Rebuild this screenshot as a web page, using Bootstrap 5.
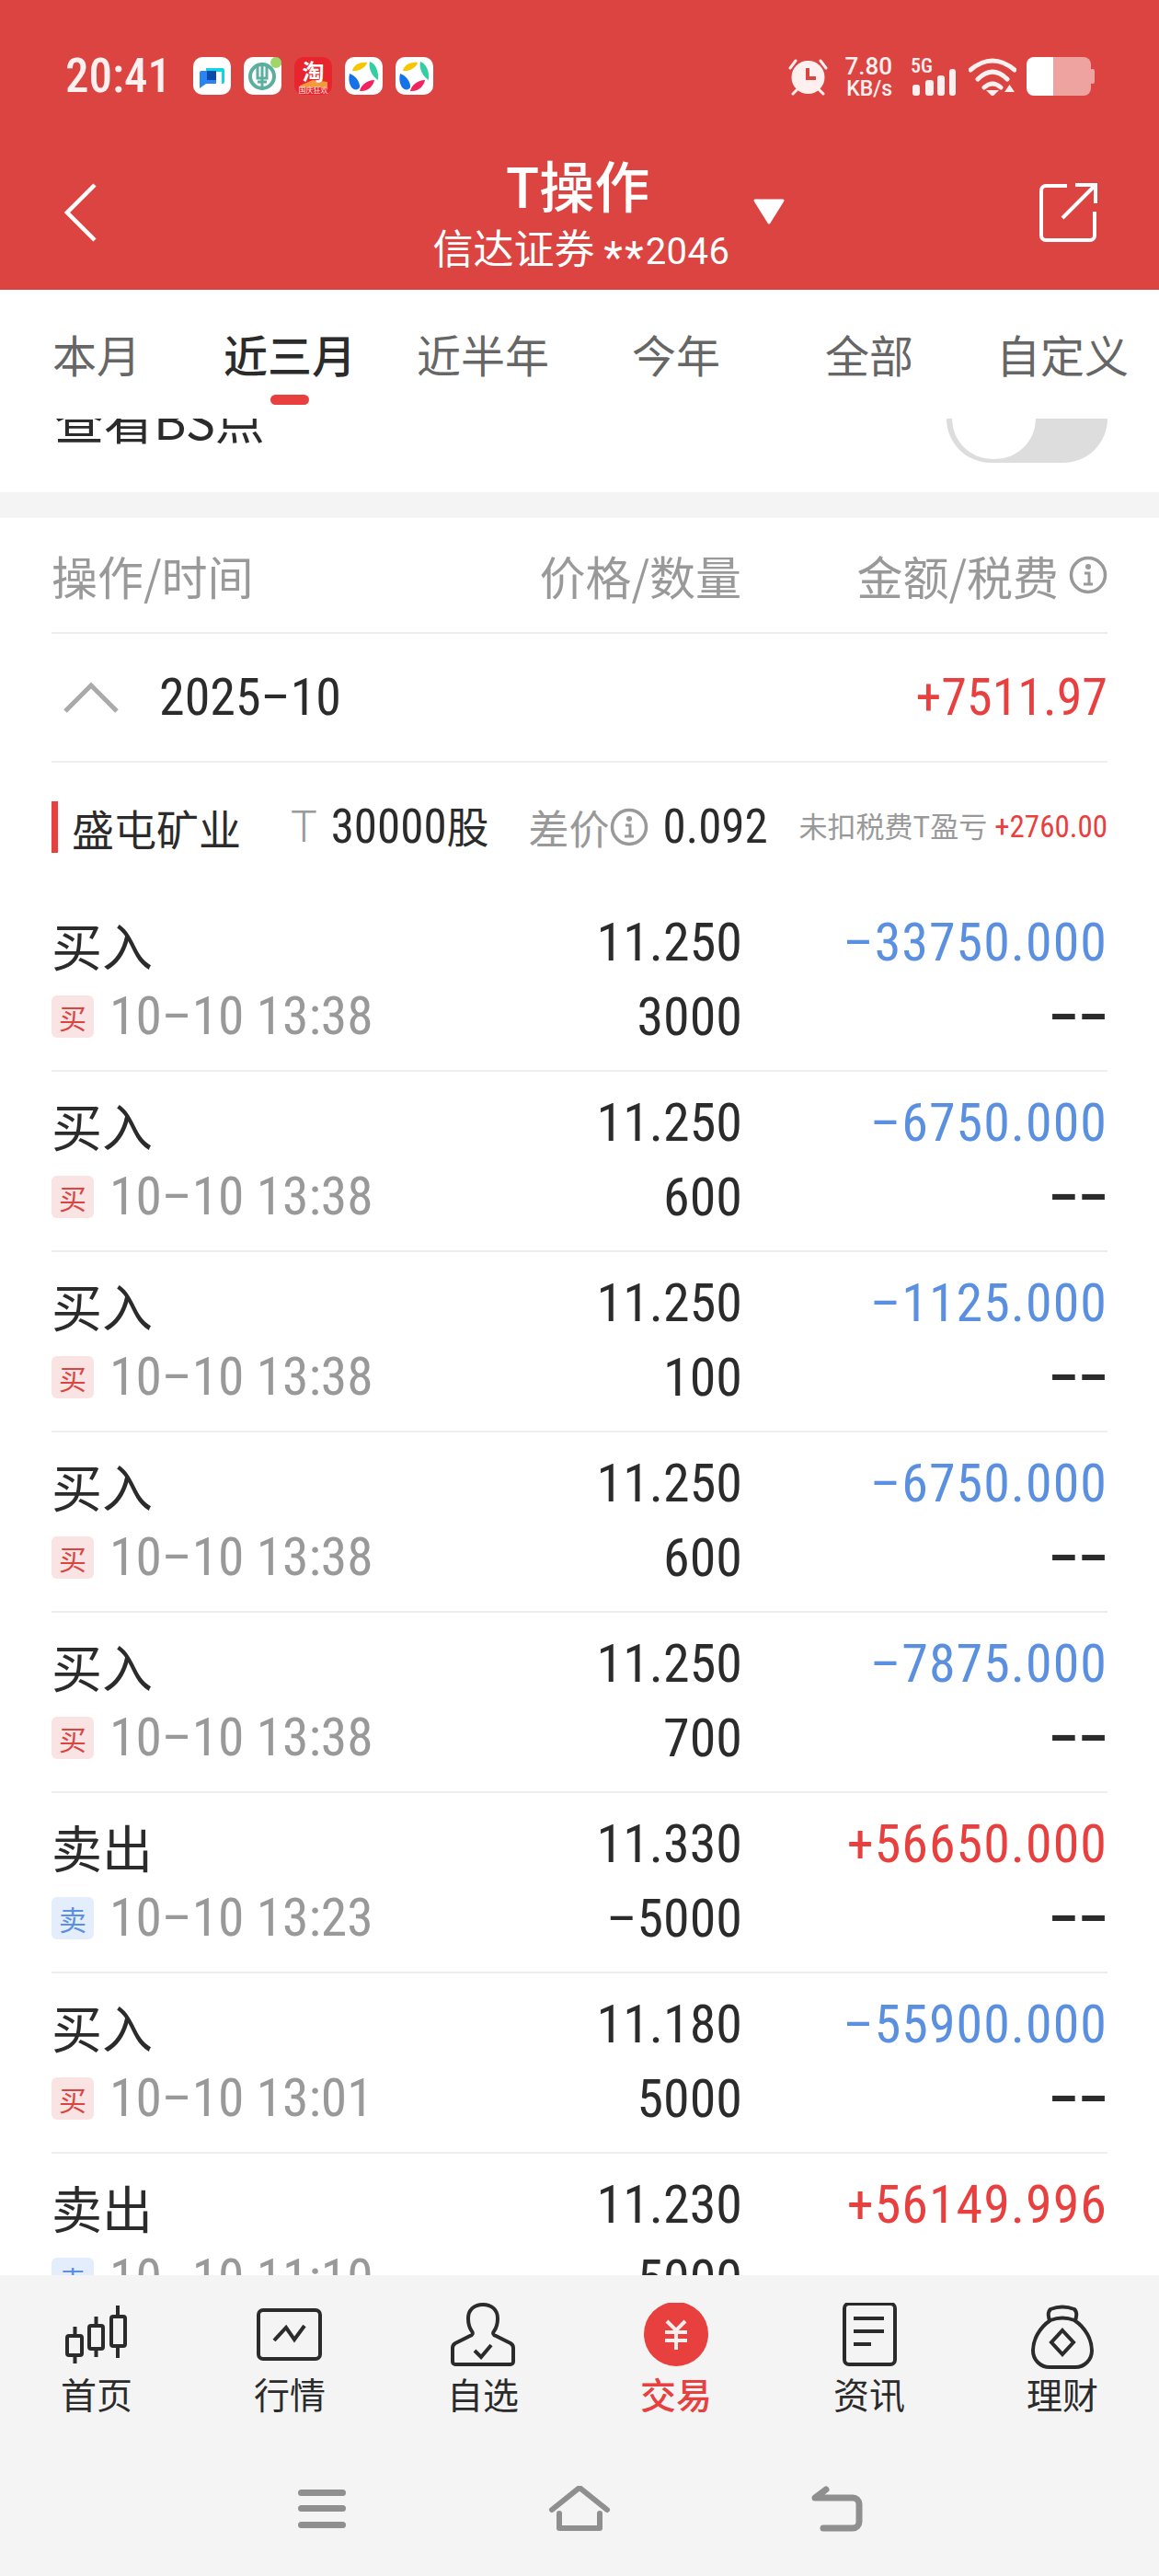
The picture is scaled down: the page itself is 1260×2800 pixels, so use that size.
<!DOCTYPE html>
<html lang="zh-CN">
<head>
    <meta charset="UTF-8">
    <meta name="viewport" content="width=device-width, initial-scale=1.0">
    <title>T操作</title>
    <link href="https://cdn.jsdelivr.net/npm/bootstrap@5.3.0/dist/css/bootstrap.min.css" rel="stylesheet">
    <style>
        body {
            font-family: "Noto Sans CJK SC", "Noto Sans", sans-serif;
            color: #2b2b2b;
            background: #fff;
        }

        .num {
            font-family: Roboto, "Noto Sans CJK SC", sans-serif;
            font-stretch: 80%;
            letter-spacing: 0;
        }

        /* header */
        .app-head { height: 315px; flex: none; background: #dc4441; color: #fff; }
        .status-line { padding: 62px 70px 0 71px; height: 104px; }
        .clock { font-size: 51px; line-height: 60px; margin-top: -9px; font-weight: 500; font-stretch: 84%; color: #fdf0ef; width: 125px; white-space: nowrap; }
        .app-icons { gap: 14px; margin-left: 14px; }
        .alarm-icon { margin-right: 16px; }
        .speed { width: 54px; color: #fdf0ef; font-weight: 500; font-stretch: 100%; text-align: right; margin-top: -3px; margin-right: 20px; }
        .speed-top { font-size: 26px; line-height: 26px; }
        .speed-unit { font-size: 23px; line-height: 21px; margin-top: 1px; }
        .signal-icon { margin-right: 13px; overflow: visible; }
        .wifi-icon { margin-right: 11px; }
        .title-grid {
            display: grid;
            grid-template-columns: 1fr auto 1fr;
            padding: 64px 66px 0 70px;
        }
        .title-main { font-size: 60px; line-height: 64px; margin-bottom: 14px; padding-right: 8px; font-weight: 500; }
        .title-sub { font-size: 44px; line-height: 44px; }
        .title-sub .num { font-size: 40px; font-stretch: 95%; letter-spacing: .5px; }
        .title-sub .stars { font-size: 48px; letter-spacing: 2px; vertical-align: -9px; }
        .head-back { margin-top: 31px; }
        .head-caret { margin-left: 24px; margin-top: 47px; }
        .head-share { margin-top: 31px; }

        /* tabs */
        .tab-strip { height: 140px; flex: none; }
        .tab-item { width: 210px; font-size: 48px; line-height: 64px; color: #666; padding-top: 37px; text-align: center; }
        .tab-item.on { color: #2b2b2b; font-weight: 500; }
        .tab-mark { width: 42px; height: 11px; border-radius: 6px; background: #e8403f; margin: 13px auto 0 auto; }

        /* clipped row under the tabs */
        .peek-row { height: 80px; flex: none; padding: 0 56px 32px 59px; }
        .peek-label { font-size: 54px; line-height: 60px; margin-bottom: 18px; white-space: nowrap; }
        .toggle-pill { width: 175px; height: 96px; flex: none; border-radius: 48px; background: #ddd; padding: 0 6px; }
        .toggle-knob { width: 91px; height: 88px; border-radius: 46px; background: #fff; }
        .gap-band { height: 28px; flex: none; background: #f4f4f4; }

        /* table */
        .col-name { width: 500px; flex: none; }
        .col-price { width: 250px; flex: none; text-align: right; }
        .col-amount { width: 398px; flex: none; text-align: right; }
        .head-line { height: 126px; font-size: 50px; color: #999; border-bottom: 2px solid #eee; margin: 0 56px; }
        .head-info { margin-left: 11px; flex: none; }
        .month-line { height: 140px; border-bottom: 2px solid #eee; margin: 0 56px; }
        .month-chevron { margin-left: 13px; }
        .month-text { font-size: 56px; margin-left: 44px; font-weight: 450; }
        .month-sum { font-size: 56px; color: #e8403f; font-weight: 450; }
        .stock-line { height: 140px; margin: 0 56px; white-space: nowrap; }
        .stock-bar { width: 7px; height: 56px; flex: none; background: #e8403f; margin-right: 15px; }
        .stock-name { font-size: 46px; }
        .stock-t { font-family: Roboto, sans-serif; font-weight: 300; font-size: 48px; color: #999; margin-left: 54px; }
        .stock-qty { font-size: 46px; margin-left: 15px; }
        .stock-qty .num { font-size: 51px; font-weight: 450; }
        .stock-gap { font-size: 44px; color: #999; margin-left: 43px; }
        .stock-info { flex: none; }
        .stock-diff { font-size: 51px; margin-left: 16px; font-weight: 450; }
        .stock-note { font-size: 31px; color: #999; margin-left: auto; }
        .stock-note .num { font-size: 33px; color: #e8403f; margin-left: 8px; }

        .deal-line { height: 196px; flex: none; border-bottom: 2px solid #eee; margin: 0 56px; padding-top: 22px; }
        .deal-a { height: 76px; line-height: 76px; white-space: nowrap; }
        .deal-b { height: 76px; line-height: 76px; white-space: nowrap; }
        .deal-kind { font-size: 55px; margin-top: -3px; margin-bottom: 3px; }
        .deal-time { font-size: 57.5px; color: #999; margin-left: 17px; }
        .deal-price { font-size: 58px; margin: -5px -1px 5px 0; font-weight: 450; font-stretch: 83%; }
        .deal-money { font-size: 58px; margin-top: -5px; margin-bottom: 5px; letter-spacing: 1px; font-weight: 450; }
        .deal-value { font-size: 58px; margin: 1px -1px 0 0; font-weight: 450; font-stretch: 83%; }
        .deal-dash { font-size: 58px; margin-top: 1px; font-weight: 600; }
        .tag-buy, .tag-sell {
            width: 46px; height: 46px; border-radius: 6px; font-size: 30px; line-height: 46px; text-align: center;
        }
        .tag-buy { background: #f9e3e3; color: #dc4441; }
        .tag-sell { background: #e3edfb; color: #5b8fe0; }
        .is-down { color: #5b8fe0; }
        .is-up { color: #e8403f; }

        /* bottom */
        .foot-bar { height: 327px; flex: none; background: #f4f4f4; }
        .foot-tabs { padding-top: 30px; }
        .foot-tab { width: 210px; text-align: center; font-size: 39px; line-height: 48px; }
        .foot-tab svg { display: block; margin: 0 auto; }
        .foot-tab.on { color: #e8403f; font-weight: 500; }
        .sys-keys { padding: 77px 210px 0 210px; }
        .sys-key { width: 280px; }
        .sys-key svg { display: block; margin: 0 auto; }
    </style>
</head>
<body>
<div class="d-flex flex-column vh-100 overflow-hidden">

    <!-- red header -->
    <header class="app-head">
        <div class="status-line d-flex align-items-start">
            <div class="clock num">20:41</div>
            <div class="app-icons d-flex">
                <svg width="41" height="41" viewBox="0 0 41 41"><rect width="41" height="41" rx="10" fill="#fff"/><path d="M14 12h18a2 2 0 0 1 2 2v13a2 2 0 0 1-2 2h-1v-13H14z" fill="#10d6e4"/><path d="M7 17a2 2 0 0 1 2-2h16v14H14l-7 5z" fill="#2a83f4"/><rect x="15" y="15" width="10" height="10" fill="#0b4aa8"/></svg>
                <svg width="41" height="41" viewBox="0 0 41 41"><rect width="41" height="41" rx="10" fill="#fff"/><circle cx="20" cy="21" r="13" fill="none" stroke="#5cae9e" stroke-width="4"/><path d="M20 6v30M15 10v13h10V10M15 27h10" fill="none" stroke="#5cae9e" stroke-width="3"/><circle cx="35" cy="6" r="6" fill="#9fd66a"/></svg>
                <svg width="41" height="41" viewBox="0 0 41 41"><rect width="41" height="41" rx="10" fill="#e8242c"/><path d="M6 31l14-6 16 2v6H6z" fill="#f59a3c"/><text x="20.500" y="25" text-anchor="middle" font-size="24" font-weight="700" fill="#fff">淘</text><text x="20.500" y="39" text-anchor="middle" font-size="8" fill="#ffe6e6">国庆狂欢</text></svg>
                <svg width="41" height="41" viewBox="0 0 41 41"><rect width="41" height="41" rx="10" fill="#fff"/><path d="M8 15c1-6 8-10 16-9-1 5-9 10-16 9z" fill="#f7c600"/><path d="M27 5c6 2 10 10 9 20-6-3-11-13-9-20z" fill="#33cfa2"/><path d="M5 18c6 2 12 9 11 15-2 4-8 3-10-2-2-4-2-9-1-13z" fill="#1672e8"/><path d="M16 37c1-6 8-12 16-12-1 6-7 13-16 12z" fill="#f0245f"/></svg>
                <svg width="41" height="41" viewBox="0 0 41 41"><rect width="41" height="41" rx="10" fill="#fff"/><path d="M8 15c1-6 8-10 16-9-1 5-9 10-16 9z" fill="#f7c600"/><path d="M27 5c6 2 10 10 9 20-6-3-11-13-9-20z" fill="#33cfa2"/><path d="M5 18c6 2 12 9 11 15-2 4-8 3-10-2-2-4-2-9-1-13z" fill="#1672e8"/><path d="M16 37c1-6 8-12 16-12-1 6-7 13-16 12z" fill="#f0245f"/></svg>
            </div>
            <div class="d-flex align-items-start ms-auto">
                <svg class="alarm-icon" width="43" height="42" viewBox="0 0 43 42"><circle cx="21.500" cy="22" r="18" fill="#fdf0ef"/><path d="M21 12v11h9" fill="none" stroke="#dc4441" stroke-width="4"/><path d="M2 12l6-8M41 12l-6-8M5 40l5-5M38 40l-5-5" stroke="#fdf0ef" stroke-width="3" stroke-linecap="round"/></svg>
                <div class="speed num">
                    <div class="speed-top">7.80</div>
                    <div class="speed-unit">KB/s</div>
                </div>
                <svg class="signal-icon" width="50" height="42" viewBox="0 0 50 42"><text class="num" x="0" y="17" font-size="22" font-weight="500" fill="#fdf0ef">5G</text><rect x="2" y="30" width="8" height="12" rx="3" fill="#fdf0ef"/><rect x="16" y="25" width="9" height="17" rx="3" fill="#fdf0ef"/><rect x="29" y="20" width="8" height="22" rx="3" fill="#fdf0ef"/><rect x="42" y="13" width="7" height="29" rx="3" fill="#fdf0ef"/></svg>
                <svg class="wifi-icon" width="52" height="42" viewBox="0 0 52 42"><path d="M2 14Q26-6 50 14M10 24Q26 8 42 24M17 33Q26 25 35 33" fill="none" stroke="#fdf0ef" stroke-width="5" stroke-linecap="round"/><path d="M19 36h14l-7 7zM39 38h11l-5.500-8z" fill="#fdf0ef"/></svg>
                <svg width="74" height="42" viewBox="0 0 74 42"><path d="M8 0h21v42H8a8 8 0 0 1-8-8V8a8 8 0 0 1 8-8z" fill="#fff"/><path d="M29 0h33a8 8 0 0 1 8 8v26a8 8 0 0 1-8 8H29z" fill="#eea3a1"/><rect x="69" y="13" width="5" height="16" rx="2" fill="#eea3a1"/></svg>
            </div>
        </div>
        <div class="title-grid">
            <div>
                <svg class="head-back" width="36" height="64" viewBox="0 0 36 64"><path d="M33 2L3 32l30 30" fill="none" stroke="#fff" stroke-width="4.500"/></svg>
            </div>
            <div class="text-center">
                <div class="title-main">T操作</div>
                <div class="title-sub">信达证券 <span class="num"><span class="stars">**</span>2046</span></div>
            </div>
            <div class="d-flex justify-content-between align-items-start">
                <svg class="head-caret" width="36" height="30" viewBox="0 0 36 30"><path d="M3 3h30L18 27z" fill="#fff" stroke="#fff" stroke-width="3" stroke-linejoin="round"/></svg>
                <svg class="head-share" width="65" height="65" viewBox="0 0 65 65"><path d="M31 3H8a5 5 0 0 0-5 5v49a5 5 0 0 0 5 5h48a5 5 0 0 0 5-5V31" fill="none" stroke="#fff" stroke-width="4"/><path d="M26 38L62 2M40 2H62V22" fill="none" stroke="#fff" stroke-width="4"/></svg>
            </div>
        </div>
    </header>

    <!-- period tabs -->
    <nav class="tab-strip d-flex">
        <div class="tab-item">本月</div>
        <div class="tab-item on">近三月<div class="tab-mark"></div></div>
        <div class="tab-item">近半年</div>
        <div class="tab-item">今年</div>
        <div class="tab-item">全部</div>
        <div class="tab-item">自定义</div>
    </nav>

    <div class="peek-row d-flex justify-content-between align-items-end overflow-hidden">
        <div class="peek-label">查看BS点</div>
        <div class="toggle-pill d-flex align-items-center">
            <div class="toggle-knob"></div>
        </div>
    </div>
    <div class="gap-band"></div>

    <main class="flex-grow-1 overflow-hidden">
        <div class="head-line d-flex align-items-center">
            <div class="col-name">操作/时间</div>
            <div class="col-price">价格/数量</div>
            <div class="col-amount d-flex justify-content-end align-items-center">
                金额/税费
                <svg class="head-info" width="42" height="42" viewBox="0 0 42 42"><circle cx="21" cy="21" r="18.500" fill="none" stroke="#999" stroke-width="3.500"/><circle cx="21" cy="12" r="3" fill="#999"/><path d="M17 19h5v12M16 31h10" fill="none" stroke="#999" stroke-width="3"/></svg>
            </div>
        </div>

        <div class="month-line d-flex align-items-center">
            <svg class="month-chevron" width="60" height="34" viewBox="0 0 60 34"><path d="M2 32L30 4l28 28" fill="none" stroke="#aaa" stroke-width="5"/></svg>
            <div class="month-text num">2025–10</div>
            <div class="month-sum num ms-auto">+7511.97</div>
        </div>

        <div class="stock-line d-flex align-items-center">
            <div class="stock-bar"></div>
            <div class="stock-name">盛屯矿业</div>
            <div class="stock-t">T</div>
            <div class="stock-qty"><span class="num">30000</span>股</div>
            <div class="stock-gap">差价</div>
            <svg class="stock-info" width="42" height="42" viewBox="0 0 42 42"><circle cx="21" cy="21" r="18.500" fill="none" stroke="#999" stroke-width="3.500"/><circle cx="21" cy="12" r="3" fill="#999"/><path d="M17 19h5v12M16 31h10" fill="none" stroke="#999" stroke-width="3"/></svg>
            <div class="stock-diff num">0.092</div>
            <div class="stock-note">未扣税费T盈亏<span class="num">+2760.00</span></div>
        </div>

        <div class="deal-line d-flex">
            <div class="col-name">
                <div class="deal-a deal-kind">买入</div>
                <div class="deal-b d-flex align-items-center"><div class="tag-buy">买</div><div class="deal-time num">10–10 13:38</div></div>
            </div>
            <div class="col-price num">
                <div class="deal-a deal-price">11.250</div>
                <div class="deal-b deal-value">3000</div>
            </div>
            <div class="col-amount num">
                <div class="deal-a deal-money is-down">–33750.000</div>
                <div class="deal-b deal-dash">––</div>
            </div>
        </div>

        <div class="deal-line d-flex">
            <div class="col-name">
                <div class="deal-a deal-kind">买入</div>
                <div class="deal-b d-flex align-items-center"><div class="tag-buy">买</div><div class="deal-time num">10–10 13:38</div></div>
            </div>
            <div class="col-price num">
                <div class="deal-a deal-price">11.250</div>
                <div class="deal-b deal-value">600</div>
            </div>
            <div class="col-amount num">
                <div class="deal-a deal-money is-down">–6750.000</div>
                <div class="deal-b deal-dash">––</div>
            </div>
        </div>

        <div class="deal-line d-flex">
            <div class="col-name">
                <div class="deal-a deal-kind">买入</div>
                <div class="deal-b d-flex align-items-center"><div class="tag-buy">买</div><div class="deal-time num">10–10 13:38</div></div>
            </div>
            <div class="col-price num">
                <div class="deal-a deal-price">11.250</div>
                <div class="deal-b deal-value">100</div>
            </div>
            <div class="col-amount num">
                <div class="deal-a deal-money is-down">–1125.000</div>
                <div class="deal-b deal-dash">––</div>
            </div>
        </div>

        <div class="deal-line d-flex">
            <div class="col-name">
                <div class="deal-a deal-kind">买入</div>
                <div class="deal-b d-flex align-items-center"><div class="tag-buy">买</div><div class="deal-time num">10–10 13:38</div></div>
            </div>
            <div class="col-price num">
                <div class="deal-a deal-price">11.250</div>
                <div class="deal-b deal-value">600</div>
            </div>
            <div class="col-amount num">
                <div class="deal-a deal-money is-down">–6750.000</div>
                <div class="deal-b deal-dash">––</div>
            </div>
        </div>

        <div class="deal-line d-flex">
            <div class="col-name">
                <div class="deal-a deal-kind">买入</div>
                <div class="deal-b d-flex align-items-center"><div class="tag-buy">买</div><div class="deal-time num">10–10 13:38</div></div>
            </div>
            <div class="col-price num">
                <div class="deal-a deal-price">11.250</div>
                <div class="deal-b deal-value">700</div>
            </div>
            <div class="col-amount num">
                <div class="deal-a deal-money is-down">–7875.000</div>
                <div class="deal-b deal-dash">––</div>
            </div>
        </div>

        <div class="deal-line d-flex">
            <div class="col-name">
                <div class="deal-a deal-kind">卖出</div>
                <div class="deal-b d-flex align-items-center"><div class="tag-sell">卖</div><div class="deal-time num">10–10 13:23</div></div>
            </div>
            <div class="col-price num">
                <div class="deal-a deal-price">11.330</div>
                <div class="deal-b deal-value">–5000</div>
            </div>
            <div class="col-amount num">
                <div class="deal-a deal-money is-up">+56650.000</div>
                <div class="deal-b deal-dash">––</div>
            </div>
        </div>

        <div class="deal-line d-flex">
            <div class="col-name">
                <div class="deal-a deal-kind">买入</div>
                <div class="deal-b d-flex align-items-center"><div class="tag-buy">买</div><div class="deal-time num">10–10 13:01</div></div>
            </div>
            <div class="col-price num">
                <div class="deal-a deal-price">11.180</div>
                <div class="deal-b deal-value">5000</div>
            </div>
            <div class="col-amount num">
                <div class="deal-a deal-money is-down">–55900.000</div>
                <div class="deal-b deal-dash">––</div>
            </div>
        </div>

        <div class="deal-line d-flex">
            <div class="col-name">
                <div class="deal-a deal-kind">卖出</div>
                <div class="deal-b d-flex align-items-center"><div class="tag-sell">卖</div><div class="deal-time num">10–10 11:10</div></div>
            </div>
            <div class="col-price num">
                <div class="deal-a deal-price">11.230</div>
                <div class="deal-b deal-value">5000</div>
            </div>
            <div class="col-amount num">
                <div class="deal-a deal-money is-up">+56149.996</div>
            </div>
        </div>
    </main>

    <!-- bottom tabs and system keys -->
    <footer class="foot-bar">
        <div class="foot-tabs d-flex">
            <div class="foot-tab">
                <svg width="100" height="74" viewBox="0 0 100 74"><g fill="none" stroke="#2b2b2b" stroke-width="4"><path d="M26.500 26V66M49.500 15V59M73 3V60"/><rect x="18" y="36" width="16" height="21" rx="2" fill="#f4f4f4"/><rect x="42" y="25" width="15" height="25" rx="2" fill="#f4f4f4"/><rect x="66" y="15" width="15" height="32" rx="2" fill="#f4f4f4"/></g></svg>
                首页
            </div>
            <div class="foot-tab">
                <svg width="100" height="74" viewBox="0 0 100 74"><rect x="16" y="8" width="67" height="53" rx="5" fill="none" stroke="#2b2b2b" stroke-width="4"/><path d="M33 41L46 27l9 13 11-15" fill="none" stroke="#2b2b2b" stroke-width="4"/></svg>
                行情
            </div>
            <div class="foot-tab">
                <svg width="100" height="74" viewBox="0 0 100 74"><path d="M20 67h60a3 3 0 0 0 3-3V49a6 6 0 0 0-3-5L64 36a3 3 0 0 1-2-5c3-4 4-8 4-14 0-9-6-15-16-15s-16 6-16 15c0 6 1 10 4 14a3 3 0 0 1-2 5L20 44a6 6 0 0 0-3 5V64a3 3 0 0 0 3 3z" fill="none" stroke="#2b2b2b" stroke-width="4"/><path d="M41 52l7 7 11-13" fill="none" stroke="#2b2b2b" stroke-width="4"/></svg>
                自选
            </div>
            <div class="foot-tab on">
                <svg width="100" height="74" viewBox="0 0 100 74"><circle cx="50" cy="34" r="35" fill="#e8403f"/><path d="M40 20l10 10 10-10M38 32h24M38 41h24M50 30v21" fill="none" stroke="#fdeeee" stroke-width="4"/></svg>
                交易
            </div>
            <div class="foot-tab">
                <svg width="100" height="74" viewBox="0 0 100 74"><rect x="23" y="1" width="55" height="66" rx="5" fill="none" stroke="#2b2b2b" stroke-width="4"/><path d="M33 17H66M33 31H66M33 45H52" fill="none" stroke="#2b2b2b" stroke-width="4"/></svg>
                资讯
            </div>
            <div class="foot-tab">
                <svg width="100" height="74" viewBox="0 0 100 74"><g fill="none" stroke="#2b2b2b" stroke-width="4"><path d="M37 20c-3-4-3-10 0-13 8-3 18-3 26 0 3 3 3 9 0 13"/><path d="M37 19C25 27 18 40 18 52c0 10 8 18 18 18h28c10 0 18-8 18-18 0-12-7-25-19-33-8-3-18-3-26 0z"/><path d="M50 30l12 13-12 13-12-13z"/></g></svg>
                理财
            </div>
        </div>
        <div class="sys-keys d-flex">
            <div class="sys-key">
                <svg width="52" height="50" viewBox="0 0 52 50"><rect y="4" width="52" height="7" rx="3.500" fill="#8f8f8f"/><rect y="21" width="52" height="7" rx="3.500" fill="#8f8f8f"/><rect y="39" width="52" height="7" rx="3.500" fill="#8f8f8f"/></svg>
            </div>
            <div class="sys-key">
                <svg width="68" height="50" viewBox="0 0 68 50"><path d="M4 26L34 2l30 24M12 30V46H56V30" fill="none" stroke="#8f8f8f" stroke-width="6" stroke-linecap="round" stroke-linejoin="round"/></svg>
            </div>
            <div class="sys-key">
                <svg width="58" height="50" viewBox="0 0 58 50"><path d="M14 46H46a7 7 0 0 0 7-7V20a7 7 0 0 0-7-7H5L17 4" fill="none" stroke="#8f8f8f" stroke-width="7" stroke-linecap="round" stroke-linejoin="round"/></svg>
            </div>
        </div>
    </footer>
</div>

<script src="https://cdn.jsdelivr.net/npm/bootstrap@5.3.0/dist/js/bootstrap.bundle.min.js"></script>
</body>
</html>
